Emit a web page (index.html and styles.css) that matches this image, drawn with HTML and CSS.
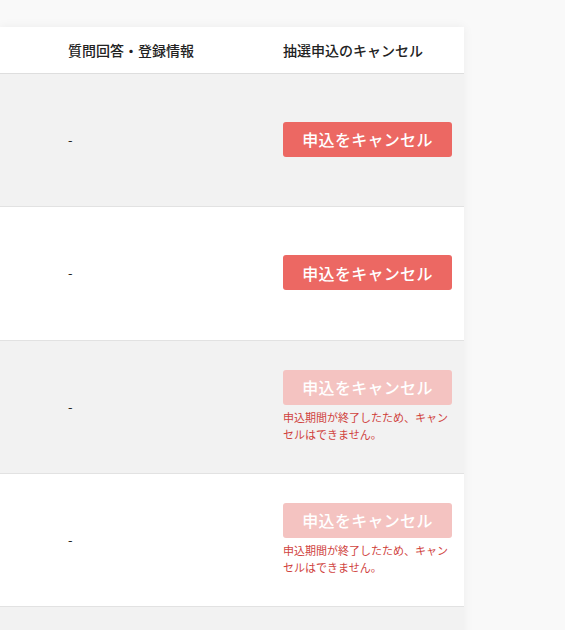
FILE: index.html
```html
<!DOCTYPE html>
<html lang="ja">
<head>
<meta charset="utf-8">
<link rel="stylesheet" href="styles.css">
</head>
<body>
<div class="table">
  <div class="row head">
    <div class="cell first"></div>
    <div class="cell">質問回答・登録情報</div>
    <div class="cell">抽選申込のキャンセル</div>
  </div>
  <div class="row odd">
    <div class="cell first"></div>
    <div class="cell">-</div>
    <div class="cell"><button class="btn">申込をキャンセル</button></div>
  </div>
  <div class="row tall">
    <div class="cell first"></div>
    <div class="cell">-</div>
    <div class="cell"><button class="btn">申込をキャンセル</button></div>
  </div>
  <div class="row odd">
    <div class="cell first"></div>
    <div class="cell">-</div>
    <div class="cell"><div class="stack"><button class="btn disabled" disabled>申込をキャンセル</button><p class="note">申込期間が終了したため、キャンセルはできません。</p></div></div>
  </div>
  <div class="row">
    <div class="cell first"></div>
    <div class="cell">-</div>
    <div class="cell"><div class="stack"><button class="btn disabled" disabled>申込をキャンセル</button><p class="note">申込期間が終了したため、キャンセルはできません。</p></div></div>
  </div>
  <div class="row odd tail">
    <div class="cell first"></div>
    <div class="cell"></div>
    <div class="cell"></div>
  </div>
</div>
</body>
</html>
```
FILE: styles.css
```css
html, body {
  margin: 0;
  padding: 0;
  background: #f9f9f9;
  font-family: "Noto Sans CJK JP", "Noto Sans", sans-serif;
  color: #222;
  overflow: hidden;
}
.table {
  margin-top: 27px;
  width: 464px;
  background: #fff;
  box-shadow: 0 0 10px rgba(0, 0, 0, 0.06);
}
.row {
  display: grid;
  grid-template-columns: 56px 215px 193px;
  height: 133px;
  padding-bottom: 2px;
  border-bottom: 1px solid #e2e2e2;
  box-sizing: border-box;
  background: #fff;
}
.row.tall {
  height: 134px;
}
.row.odd {
  background: #f2f2f2;
}
.row.head {
  height: 47px;
  padding-bottom: 0;
  border-bottom: 1px solid #dedede;
}
.row.head .cell {
  font-size: 14px;
  font-weight: 500;
  color: #222;
}
.row.tail {
  height: 40px;
  border-bottom: none;
}
.cell {
  display: flex;
  align-items: center;
  padding: 0 12px;
  font-size: 13px;
}
.cell.first {
  padding: 0;
}
.stack {
  display: flex;
  flex-direction: column;
  width: 169px;
}
.btn {
  width: 169px;
  height: 35px;
  border: none;
  border-radius: 3px;
  background: #ec6863;
  color: #fff;
  font-family: "Noto Sans CJK JP", "Noto Sans", sans-serif;
  font-size: 16px;
  font-weight: 500;
  letter-spacing: 0.3px;
  padding: 0;
}
.btn.disabled {
  background: #f4c3c1;
}
.note {
  margin: 4px 0 0;
  font-size: 11px;
  line-height: 17px;
  color: #d0433e;
}
```
